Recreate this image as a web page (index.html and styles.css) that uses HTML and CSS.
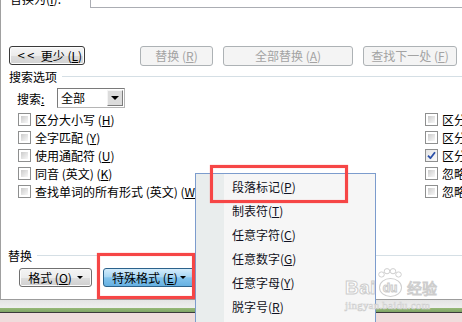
FILE: index.html
```html
<!DOCTYPE html>
<html lang="zh-CN">
<head>
<meta charset="utf-8">
<title>查找和替换</title>
<link rel="stylesheet" href="styles.css">
</head>
<body>
<div class="screen">
  <div class="dialog">
    <div class="top-row">
      <span class="top-label">替换为(<u>I</u>):</span>
      <div class="top-input"></div>
    </div>
    <div class="btn-row">
      <div class="btn btn-less"><span class="chev">&lt;&lt;</span>更少 (<u>L</u>)</div>
      <div class="btn btn-disabled w-replace">替换 (<u>R</u>)</div>
      <div class="btn btn-disabled w-all">全部替换 (<u>A</u>)</div>
      <div class="btn btn-disabled w-next">查找下一处 (<u>F</u>)</div>
    </div>
    <div class="legend legend-search"><span class="legend-text">搜索选项</span><span class="rule"></span></div>
    <div class="search-row">
      <span class="search-label">搜索<u>:</u></span>
      <div class="select"><span class="select-text">全部</span><span class="select-arrow"><span class="tri"></span></span></div>
    </div>
    <div class="options">
      <div class="col col-left">
        <div class="opt"><span class="cb"></span>区分大小写 (<u>H</u>)</div>
        <div class="opt"><span class="cb"></span>全字匹配 (<u>Y</u>)</div>
        <div class="opt"><span class="cb"></span>使用通配符 (<u>U</u>)</div>
        <div class="opt"><span class="cb"></span>同音 (英文) (<u>K</u>)</div>
        <div class="opt"><span class="cb"></span>查找单词的所有形式 (英文) (<u>W</u>)</div>
      </div>
      <div class="col col-right">
        <div class="opt"><span class="cb"></span>区分前缀</div>
        <div class="opt"><span class="cb"></span>区分后缀</div>
        <div class="opt"><span class="cb cb-checked"><svg width="9" height="9" viewBox="0 0 9 9"><path d="M1 4.6 L3.4 7.2 L8 1.2" fill="none" stroke="#2a4fa8" stroke-width="1.8" stroke-linejoin="round"/></svg></span>区分全/半角</div>
        <div class="opt"><span class="cb"></span>忽略标点符号</div>
        <div class="opt"><span class="cb"></span>忽略空格</div>
      </div>
    </div>
    <div class="legend legend-replace"><span class="legend-text">替换</span><span class="rule"></span></div>
    <div class="fmt-row">
      <div class="btn btn-gray">格式 (<u>O</u>)<span class="caret"></span></div>
      <div class="btn btn-blue">特殊格式 (<u>E</u>)<span class="caret"></span></div>
    </div>
  </div>
  <div class="taskbar">
    <div class="band-gray"></div>
    <div class="band-green"></div>
    <div class="band-dark"></div>
    <div class="band-pink"></div>
  </div>

  <div class="menu">
    <div class="menu-item">段落标记(<u>P</u>)</div>
    <div class="menu-item">制表符(<u>T</u>)</div>
    <div class="menu-item">任意字符(<u>C</u>)</div>
    <div class="menu-item">任意数字(<u>G</u>)</div>
    <div class="menu-item">任意字母(<u>Y</u>)</div>
    <div class="menu-item">脱字号(<u>R</u>)</div>
  </div>

  <div class="hl hl-menu"></div>
  <div class="hl hl-btn"></div>

  <div class="watermark">
    <div class="wm-main">
      <span class="wm-bai">Bai</span>
      <span class="wm-paw">
        <svg class="wm-toes" width="24" height="10" viewBox="0 0 24 10"><g fill="#fff" stroke="#cfcfcf" stroke-width="1"><ellipse cx="3.5" cy="6.5" rx="2.8" ry="2.6"/><ellipse cx="9" cy="3.2" rx="2.8" ry="2.6"/><ellipse cx="15" cy="3.2" rx="2.8" ry="2.6"/><ellipse cx="20.5" cy="6.5" rx="2.8" ry="2.6"/></g></svg>
        <span class="wm-du">du</span>
      </span>
      <span class="wm-jy">经验</span>
    </div>
    <div class="wm-url">jingyan.baidu.com</div>
  </div>
</div>
</body>
</html>
```

FILE: styles.css
```css
* { box-sizing: border-box; }

html, body {
  margin: 0;
  padding: 0;
}

body {
  width: 462px;
  height: 322px;
  overflow: hidden;
  background: #ffffff;
  font-family: "Noto Sans CJK SC", "Noto Sans", sans-serif;
  font-size: 12px;
  color: #000;
}

u { text-decoration: underline; text-underline-offset: 1px; }

.screen {
  position: relative;
  width: 462px;
  height: 322px;
  overflow: hidden;
}

.dialog {
  height: 300px;
  border-left: 1px solid #a0a0a0;
  border-bottom: 1px solid #9c9c9c;
  background: #fff;
  overflow: hidden;
}

/* top row (cut off at the top edge) */
.top-row {
  display: flex;
  align-items: flex-start;
  height: 8px;
}
.top-label {
  margin-left: 9px;
  margin-top: -7px;
  width: 80px;
  line-height: 12px;
  white-space: nowrap;
}
.top-input {
  flex: 1;
  margin-top: -20px;
  height: 28px;
  border: 1px solid #abadb3;
  margin-right: -10px;
}

/* buttons */
.btn {
  display: flex;
  align-items: center;
  justify-content: center;
  height: 20px;
  border-radius: 3px;
  white-space: nowrap;
  line-height: 14px;
}

.btn-row {
  display: flex;
  margin-top: 38px;
  height: 20px;
}
.btn-less {
  margin-left: 8px;
  width: 76px;
  height: 19px;
  border: 1px solid #3a3a3a;
  background: linear-gradient(#f6f6f6, #ececec 50%, #dddddd 51%, #d2d2d2);
  box-shadow: inset 0 0 0 1px #fcfcfc;
  justify-content: flex-start;
  padding-left: 7px;
}
.chev {
  letter-spacing: 1px;
  margin-right: 5px;
  font-family: "DejaVu Sans", sans-serif;
  font-size: 10px;
}
.btn-disabled {
  border: 1px solid #adb2b5;
  background: #f4f4f4;
  color: #a3a3a3;
}
.w-replace { margin-left: 55px; width: 73px; }
.w-all { margin-left: 10px; width: 130px; }
.w-next { margin-left: 10px; width: 94px; }

/* group legends */
.legend {
  display: flex;
  align-items: flex-start;
  height: 14px;
  line-height: 14px;
}
.legend-search { margin-top: 4px; }
.legend-search .legend-text { margin-left: 8px; }
.legend-search .rule { margin-left: 5px; }
.rule {
  flex: 1;
  margin-top: 6px;
  height: 1px;
  background: #d5dfe5;
}

/* search row */
.search-row {
  display: flex;
  align-items: center;
  margin-top: 4px;
  height: 20px;
}
.search-label {
  margin-left: 16px;
  width: 40px;
}
.select {
  display: flex;
  align-items: stretch;
  width: 68px;
  height: 20px;
  border: 1px solid;
  border-color: #7a7a7a #b5b5b5 #b5b5b5 #7a7a7a;
  background: #fff;
  padding: 1px;
}
.select-text {
  flex: 1;
  padding-left: 2px;
  line-height: 16px;
}
.select-arrow {
  width: 16px;
  display: flex;
  align-items: center;
  justify-content: center;
  background: #dcdcdc;
  border: 1px solid;
  border-color: #f4f4f4 #7c7c7c #7c7c7c #f4f4f4;
}
.tri {
  width: 0;
  height: 0;
  border-left: 4px solid transparent;
  border-right: 4px solid transparent;
  border-top: 4px solid #000;
}

/* options */
.options {
  display: flex;
  margin-top: 2px;
}
.col-left {
  flex: 1;
  padding-left: 17px;
}
.col-right {
  width: 37px;
  overflow: hidden;
}
.opt {
  display: flex;
  align-items: center;
  height: 18px;
  white-space: nowrap;
}
.cb {
  flex: none;
  width: 13px;
  height: 13px;
  margin-right: 4px;
  border: 1px solid #8e8f8f;
  background: #fff;
  padding: 2px;
  display: flex;
  align-items: center;
  justify-content: center;
}
.cb::after {
  content: "";
  display: block;
  width: 7px;
  height: 7px;
  background: linear-gradient(135deg, #cbcbcb, #efefef 80%, #f8f8f8);
}
.cb-checked {
  padding: 0;
  background: linear-gradient(135deg, #e4e4e4, #fafafa);
}
.cb-checked::after { display: none; }

/* replace section */
.legend-replace { margin-top: 49px; }
.legend-replace .legend-text { margin-left: 7px; }
.legend-replace .rule { margin-left: 5px; }

.fmt-row {
  display: flex;
  margin-top: 5px;
  height: 19px;
}
.btn-gray {
  margin-left: 18px;
  width: 73px;
  height: 19px;
  border: 1px solid #707070;
  background: linear-gradient(#f4f4f4, #ececec 50%, #dedede 51%, #cfcfcf);
  box-shadow: inset 0 0 0 1px #fbfbfb;
}
.btn-blue {
  margin-left: 11px;
  width: 94px;
  height: 19px;
  border: 1px solid #2c628b;
  background: linear-gradient(#d4ecfb, #a9d7f4 45%, #83c3ec 52%, #66b1e2);
  justify-content: flex-start;
  padding-left: 8px;
}
.caret {
  display: inline-block;
  width: 0;
  height: 0;
  margin-left: 5px;
  border-left: 3px solid transparent;
  border-right: 3px solid transparent;
  border-top: 3px solid #000;
}
.btn-blue .caret { margin-left: 2px; }

/* taskbar at bottom */
.taskbar { height: 22px; }
.band-gray { height: 8px; background: linear-gradient(#e4e4e4, #efefef); }
.band-green { height: 4px; background: linear-gradient(#97b878, #7ea565); }
.band-dark { height: 1px; background: #3b3b3b; }
.band-pink { height: 9px; background: #efdcdc; }

/* popup menu */
.menu {
  position: absolute;
  left: 195px;
  top: 173px;
  width: 181px;
  height: 160px;
  border: 1px solid #7c9ccd;
  background: linear-gradient(90deg, #e9eded 0, #e9eded 28px, #f6f6f6 28px);
  padding-top: 1px;
}
.menu-item {
  height: 24px;
  line-height: 24px;
  padding-left: 36px;
  color: #111122;
  font-size: 12px;
  white-space: nowrap;
}

/* red highlight boxes */
.hl {
  position: absolute;
  border: 3px solid #f64646;
  box-shadow: 0 0 1px rgba(255, 60, 60, 0.6), inset 0 0 1px rgba(255, 60, 60, 0.6);
}
.hl-menu { left: 210px; top: 165px; width: 138px; height: 38px; }
.hl-btn { left: 97px; top: 253px; width: 98px; height: 46px; }

/* watermark */
.watermark {
  position: absolute;
  left: 345px;
  top: 266px;
  width: 110px;
}
.wm-main {
  display: flex;
  align-items: flex-end;
  height: 31px;
}
.wm-bai {
  font-family: "Liberation Sans", sans-serif;
  font-weight: bold;
  font-size: 19px;
  line-height: 19px;
  color: #fff;
  -webkit-text-stroke: 1px #cdcdcd;
  letter-spacing: 0.5px;
}
.wm-paw {
  display: flex;
  flex-direction: column;
  align-items: center;
  margin-left: 2px;
}
.wm-toes { display: block; }
.wm-du {
  display: flex;
  align-items: center;
  justify-content: center;
  width: 23px;
  height: 19px;
  border-radius: 50%;
  border: 1px solid #cfcfcf;
  background: #fff;
  font-family: "Liberation Sans", sans-serif;
  font-weight: bold;
  font-size: 12px;
  color: #fff;
  -webkit-text-stroke: 1px #cbcbcb;
}
.wm-jy {
  margin-left: 5px;
  font-size: 15px;
  line-height: 19px;
  color: #fff;
  -webkit-text-stroke: 1px #cdcdcd;
}
.wm-url {
  margin-top: 3px;
  font-family: "Liberation Serif", serif;
  font-size: 11px;
  line-height: 11px;
  color: #fff;
  -webkit-text-stroke: 0.6px #cfcfcf;
  letter-spacing: 0.2px;
}
```
